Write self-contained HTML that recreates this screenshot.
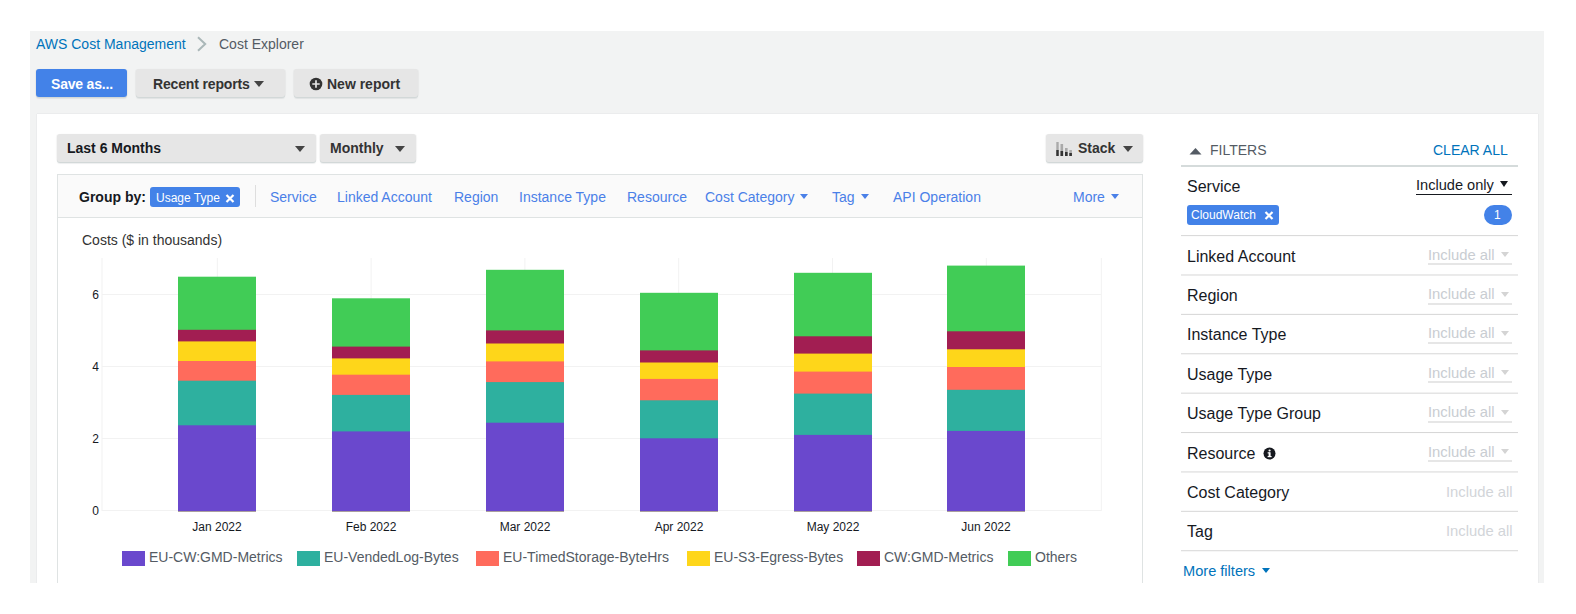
<!DOCTYPE html>
<html><head><meta charset="utf-8">
<style>
*{box-sizing:border-box;margin:0;padding:0}
html,body{width:1576px;height:614px;overflow:hidden;background:#fff}
body{position:relative;font-family:"Liberation Sans",sans-serif;color:#16191f}
.a{position:absolute;white-space:nowrap}
.t{position:absolute;white-space:nowrap;line-height:1}
#bg{left:30px;top:31px;width:1514px;height:552px;background:#f2f3f3}
#card{left:37px;top:114px;width:1501px;height:469px;background:#fff;box-shadow:0 0 1px 0 rgba(0,28,36,.18)}
.btn{position:absolute;top:69px;height:28px;border-radius:3px;background:#e6e6e6;box-shadow:0 1px 0 0 #d2d8d8,0 2px 1px 0 rgba(0,28,36,.07),1px 0 1px 0 rgba(0,28,36,.04),-1px 0 1px 0 rgba(0,28,36,.04)}
.b14{font-size:14px;font-weight:bold;color:#333}
.caret{position:absolute;width:0;height:0;border-left:5px solid transparent;border-right:5px solid transparent;border-top:6px solid #444}
.lnk{font-size:14px;color:#4a80e8}
.gl{position:absolute;background:#f2f2f2}
.seg{position:absolute;width:78px}
.yl{position:absolute;font-size:12px;color:#16191f;line-height:1;width:20px;text-align:right}
.xl{position:absolute;font-size:12px;color:#16191f;line-height:1;width:80px;text-align:center}
.sw{position:absolute;top:551px;width:23px;height:15px}
.lg{position:absolute;font-size:14px;color:#545b64;line-height:1;top:550px}
.fsep{position:absolute;left:1181px;width:337px;height:1px;background:#d6d6d6}
.flab{position:absolute;left:1187px;font-size:16px;color:#16191f;line-height:1}
.inc{position:absolute;font-size:14.8px;color:#c9cdd2;line-height:1}
.incu{position:absolute;left:1428px;width:84px;height:2px;background:#e6e6e6}
.incc{position:absolute;width:0;height:0;border-left:4px solid transparent;border-right:4px solid transparent;border-top:5px solid #d4d4d4}
</style></head><body>
<div id="bg" class="a"></div>
<div id="card" class="a"></div>

<!-- breadcrumb -->
<div class="t" style="left:36px;top:37px;font-size:14px;color:#0073bb">AWS Cost Management</div>
<svg class="a" style="left:196px;top:36px" width="12" height="16" viewBox="0 0 12 16"><path d="M2 1.3 L9.2 8 L2 14.7" fill="none" stroke="#aab7b8" stroke-width="2"/></svg>
<div class="t" style="left:219px;top:37px;font-size:14px;color:#545b64">Cost Explorer</div>

<!-- top buttons -->
<div class="btn" style="left:36px;width:91px;background:#4382e8"></div>
<div class="t b14" style="left:51px;top:77px;color:#fff;letter-spacing:-0.2px">Save as...</div>
<div class="btn" style="left:136px;width:149px"></div>
<div class="t b14" style="left:153px;top:77px;letter-spacing:-0.15px">Recent reports</div>
<div class="caret" style="left:254px;top:81px;border-left-width:5.5px;border-right-width:5.5px;border-top-width:6px"></div>
<div class="btn" style="left:294px;width:124px"></div>
<svg class="a" style="left:309px;top:77px" width="14" height="14" viewBox="0 0 14 14"><circle cx="7" cy="7" r="6.3" fill="#333"/><path d="M7 3.3v7.4M3.3 7h7.4" stroke="#e6e6e6" stroke-width="1.7"/></svg>
<div class="t b14" style="left:327px;top:77px">New report</div>

<!-- dropdown row -->
<div class="btn" style="left:57px;top:134px;width:259px"></div>
<div class="t b14" style="left:67px;top:141px;color:#16191f">Last 6 Months</div>
<div class="caret" style="left:295px;top:146px"></div>
<div class="btn" style="left:320px;top:134px;width:96px"></div>
<div class="t b14" style="left:330px;top:141px">Monthly</div>
<div class="caret" style="left:395px;top:146px"></div>
<div class="btn" style="left:1046px;top:134px;width:97px"></div>
<svg class="a" style="left:1056px;top:141px" width="17" height="15" viewBox="0 0 17 15">
<rect x="0.3" y="1" width="2.4" height="14" fill="#aaa"/><rect x="0.3" y="9" width="2.4" height="6" fill="#333"/>
<rect x="4.5" y="3" width="2.6" height="12" fill="#aaa"/><rect x="4.5" y="10" width="2.6" height="5" fill="#333"/>
<rect x="9" y="7" width="2.6" height="8" fill="#aaa"/><rect x="9" y="11" width="2.6" height="4" fill="#333"/>
<rect x="13.3" y="9" width="2.6" height="6" fill="#aaa"/><rect x="13.3" y="12" width="2.6" height="3" fill="#333"/>
</svg>
<div class="t b14" style="left:1078px;top:141px">Stack</div>
<div class="caret" style="left:1123px;top:146px"></div>

<!-- group by bar + chart container -->
<div class="a" style="left:57px;top:174px;width:1086px;height:409px;border:1px solid #dfe3e3;border-bottom:none"></div>
<div class="a" style="left:58px;top:175px;width:1084px;height:43px;background:#fafafa;border-bottom:1px solid #dfe3e3"></div>
<div class="t b14" style="left:79px;top:190px;color:#16191f">Group by:</div>
<div class="a" style="left:150px;top:187px;width:90px;height:20px;background:#4382e8;border-radius:3px"></div>
<div class="t" style="left:156px;top:192px;font-size:12px;color:#fff">Usage Type</div>
<svg class="a" style="left:225px;top:194px" width="10" height="9" viewBox="0 0 10 9"><path d="M1.5 1L8.5 8M8.5 1L1.5 8" stroke="#fff" stroke-width="2.2"/></svg>
<div class="a" style="left:255px;top:185px;width:1px;height:22px;background:#dedede"></div>
<div class="t lnk" style="left:270px;top:190px">Service</div>
<div class="t lnk" style="left:337px;top:190px">Linked Account</div>
<div class="t lnk" style="left:454px;top:190px">Region</div>
<div class="t lnk" style="left:519px;top:190px">Instance Type</div>
<div class="t lnk" style="left:627px;top:190px">Resource</div>
<div class="t lnk" style="left:705px;top:190px">Cost Category</div>
<div class="caret" style="left:800px;top:194px;border-left-width:4.5px;border-right-width:4.5px;border-top:5px solid #4a80e8"></div>
<div class="t lnk" style="left:832px;top:190px">Tag</div>
<div class="caret" style="left:861px;top:194px;border-left-width:4.5px;border-right-width:4.5px;border-top:5px solid #4a80e8"></div>
<div class="t lnk" style="left:893px;top:190px">API Operation</div>
<div class="t lnk" style="left:1073px;top:190px">More</div>
<div class="caret" style="left:1111px;top:194px;border-left-width:4.5px;border-right-width:4.5px;border-top:5px solid #4a80e8"></div>

<div class="t" style="left:82px;top:233px;font-size:14px;color:#333">Costs ($ in thousands)</div>

<!-- CHART -->
<div id="chart">
<svg class="a" style="left:0;top:0" width="1576" height="614" viewBox="0 0 1576 614">
<g fill="#f2f2f2">
<rect x="101.5" y="258" width="1" height="253"/>
<rect x="1100.8" y="258" width="1" height="253"/>
<rect x="102" y="510.0" width="999" height="1"/>
<rect x="102" y="438.0" width="999" height="1"/>
<rect x="102" y="366.0" width="999" height="1"/>
<rect x="102" y="294.0" width="999" height="1"/>
<rect x="216.80" y="258" width="1" height="253"/>
<rect x="370.60" y="258" width="1" height="253"/>
<rect x="524.40" y="258" width="1" height="253"/>
<rect x="678.20" y="258" width="1" height="253"/>
<rect x="832.00" y="258" width="1" height="253"/>
<rect x="985.80" y="258" width="1" height="253"/>
</g>
<rect x="178" y="276.70" width="78" height="234.50" fill="#41cc56"/>
<rect x="178" y="329.80" width="78" height="181.40" fill="#a21e52"/>
<rect x="178" y="341.40" width="78" height="169.80" fill="#fed61a"/>
<rect x="178" y="361.00" width="78" height="150.20" fill="#ff6b5c"/>
<rect x="178" y="380.70" width="78" height="130.50" fill="#2eb09f"/>
<rect x="178" y="425.30" width="78" height="85.90" fill="#6a48cd"/>
<rect x="332" y="298.30" width="78" height="212.90" fill="#41cc56"/>
<rect x="332" y="346.60" width="78" height="164.60" fill="#a21e52"/>
<rect x="332" y="358.40" width="78" height="152.80" fill="#fed61a"/>
<rect x="332" y="374.70" width="78" height="136.50" fill="#ff6b5c"/>
<rect x="332" y="394.90" width="78" height="116.30" fill="#2eb09f"/>
<rect x="332" y="431.40" width="78" height="79.80" fill="#6a48cd"/>
<rect x="486" y="269.80" width="78" height="241.40" fill="#41cc56"/>
<rect x="486" y="330.40" width="78" height="180.80" fill="#a21e52"/>
<rect x="486" y="343.50" width="78" height="167.70" fill="#fed61a"/>
<rect x="486" y="361.40" width="78" height="149.80" fill="#ff6b5c"/>
<rect x="486" y="382.10" width="78" height="129.10" fill="#2eb09f"/>
<rect x="486" y="422.70" width="78" height="88.50" fill="#6a48cd"/>
<rect x="640" y="292.80" width="78" height="218.40" fill="#41cc56"/>
<rect x="640" y="350.40" width="78" height="160.80" fill="#a21e52"/>
<rect x="640" y="362.50" width="78" height="148.70" fill="#fed61a"/>
<rect x="640" y="378.90" width="78" height="132.30" fill="#ff6b5c"/>
<rect x="640" y="400.30" width="78" height="110.90" fill="#2eb09f"/>
<rect x="640" y="438.30" width="78" height="72.90" fill="#6a48cd"/>
<rect x="794" y="272.80" width="78" height="238.40" fill="#41cc56"/>
<rect x="794" y="336.30" width="78" height="174.90" fill="#a21e52"/>
<rect x="794" y="353.60" width="78" height="157.60" fill="#fed61a"/>
<rect x="794" y="371.60" width="78" height="139.60" fill="#ff6b5c"/>
<rect x="794" y="393.60" width="78" height="117.60" fill="#2eb09f"/>
<rect x="794" y="434.90" width="78" height="76.30" fill="#6a48cd"/>
<rect x="947" y="265.60" width="78" height="245.60" fill="#41cc56"/>
<rect x="947" y="331.30" width="78" height="179.90" fill="#a21e52"/>
<rect x="947" y="349.30" width="78" height="161.90" fill="#fed61a"/>
<rect x="947" y="367.00" width="78" height="144.20" fill="#ff6b5c"/>
<rect x="947" y="389.80" width="78" height="121.40" fill="#2eb09f"/>
<rect x="947" y="430.90" width="78" height="80.30" fill="#6a48cd"/>
</svg>
<div class="yl" style="left:79px;top:505px">0</div>
<div class="yl" style="left:79px;top:433px">2</div>
<div class="yl" style="left:79px;top:361px">4</div>
<div class="yl" style="left:79px;top:289px">6</div>
<div class="xl" style="left:177px;top:521px">Jan 2022</div>
<div class="xl" style="left:331px;top:521px">Feb 2022</div>
<div class="xl" style="left:485px;top:521px">Mar 2022</div>
<div class="xl" style="left:639px;top:521px">Apr 2022</div>
<div class="xl" style="left:793px;top:521px">May 2022</div>
<div class="xl" style="left:946px;top:521px">Jun 2022</div>
<div class="sw" style="left:122px;background:#6a48cd"></div>
<div class="lg" style="left:149px">EU-CW:GMD-Metrics</div>
<div class="sw" style="left:297px;background:#2eb09f"></div>
<div class="lg" style="left:324px">EU-VendedLog-Bytes</div>
<div class="sw" style="left:476px;background:#ff6b5c"></div>
<div class="lg" style="left:503px">EU-TimedStorage-ByteHrs</div>
<div class="sw" style="left:687px;background:#fed61a"></div>
<div class="lg" style="left:714px">EU-S3-Egress-Bytes</div>
<div class="sw" style="left:857px;background:#a21e52"></div>
<div class="lg" style="left:884px">CW:GMD-Metrics</div>
<div class="sw" style="left:1008px;background:#41cc56"></div>
<div class="lg" style="left:1035px">Others</div>
</div><!--/chart-->

<!-- FILTERS -->
<div id="filters">
<svg class="a" style="left:1189px;top:147px" width="13" height="8" viewBox="0 0 13 8"><path d="M0.5 7.5L6.5 1L12.5 7.5Z" fill="#545b64"/></svg>
<div class="t" style="left:1210px;top:143px;font-size:14px;color:#545b64">FILTERS</div>
<div class="t" style="left:1433px;top:143px;font-size:14px;color:#0073bb">CLEAR ALL</div>
<div class="a" style="left:1181px;top:165px;width:337px;height:2px;background:#d5dbdb"></div>
<div class="flab" style="top:179px">Service</div>
<div class="t" style="left:1416px;top:178px;font-size:14.6px;color:#16191f">Include only</div>
<div class="incc" style="left:1500px;top:181px;border-left-width:4.5px;border-right-width:4.5px;border-top:6px solid #16191f"></div>
<div class="a" style="left:1416px;top:194px;width:96px;height:1px;background:#16191f"></div>
<div class="a" style="left:1187px;top:205px;width:92px;height:20px;background:#4382e8;border-radius:3px"></div>
<div class="t" style="left:1191px;top:209px;font-size:12px;color:#fff">CloudWatch</div>
<svg class="a" style="left:1264px;top:211px" width="10" height="9" viewBox="0 0 10 9"><path d="M1.5 1L8.5 8M8.5 1L1.5 8" stroke="#fff" stroke-width="2.2"/></svg>
<div class="a" style="left:1484px;top:205px;width:28px;height:20px;background:#4382e8;border-radius:10px"></div>
<div class="t" style="left:1494px;top:209px;font-size:12px;color:#fff">1</div>
<svg class="a" style="left:1181px;top:220px" width="337" height="340" viewBox="0 220 337 340"><g fill="#d6d6d6"><rect x="0" y="235.10" width="337" height="1"/><rect x="0" y="274.49" width="337" height="1"/><rect x="0" y="313.88" width="337" height="1"/><rect x="0" y="353.27" width="337" height="1"/><rect x="0" y="392.66" width="337" height="1"/><rect x="0" y="432.05" width="337" height="1"/><rect x="0" y="471.44" width="337" height="1"/><rect x="0" y="510.83" width="337" height="1"/><rect x="0" y="550.22" width="337" height="1"/></g></svg>
<div class="flab" style="top:249px">Linked Account</div>
<div class="inc" style="left:1428px;top:248px">Include all</div>
<div class="incc" style="left:1501px;top:252px"></div>
<div class="incu" style="top:263px"></div>
<div class="flab" style="top:288px">Region</div>
<div class="inc" style="left:1428px;top:287px">Include all</div>
<div class="incc" style="left:1501px;top:292px"></div>
<div class="incu" style="top:303px"></div>
<div class="flab" style="top:327px">Instance Type</div>
<div class="inc" style="left:1428px;top:326px">Include all</div>
<div class="incc" style="left:1501px;top:331px"></div>
<div class="incu" style="top:342px"></div>
<div class="flab" style="top:367px">Usage Type</div>
<div class="inc" style="left:1428px;top:366px">Include all</div>
<div class="incc" style="left:1501px;top:370px"></div>
<div class="incu" style="top:381px"></div>
<div class="flab" style="top:406px">Usage Type Group</div>
<div class="inc" style="left:1428px;top:405px">Include all</div>
<div class="incc" style="left:1501px;top:410px"></div>
<div class="incu" style="top:421px"></div>
<div class="flab" style="top:446px">Resource</div>
<div class="inc" style="left:1428px;top:445px">Include all</div>
<div class="incc" style="left:1501px;top:449px"></div>
<div class="incu" style="top:460px"></div>
<div class="flab" style="top:485px">Cost Category</div>
<div class="inc" style="left:1446px;top:485px;color:#d2d5d9">Include all</div>
<div class="flab" style="top:524px">Tag</div>
<div class="inc" style="left:1446px;top:524px;color:#d2d5d9">Include all</div>
<svg class="a" style="left:1263px;top:447px" width="13" height="13" viewBox="0 0 13 13"><circle cx="6.5" cy="6.5" r="6" fill="#16191f"/><rect x="5.6" y="5.3" width="2" height="4.6" fill="#fff"/><rect x="4.6" y="9" width="4" height="1.2" fill="#fff"/><rect x="4.6" y="5.3" width="2" height="1.1" fill="#fff"/><circle cx="6.6" cy="3.5" r="1.1" fill="#fff"/></svg>
<div class="t" style="left:1183px;top:564px;font-size:14.6px;color:#0073bb">More filters</div>
<div class="incc" style="left:1262px;top:568px;border-top-color:#0073bb"></div>
</div><!--/filters-->
<div class="a" style="left:0;top:583px;width:1576px;height:31px;background:#fff"></div>
</body></html>
